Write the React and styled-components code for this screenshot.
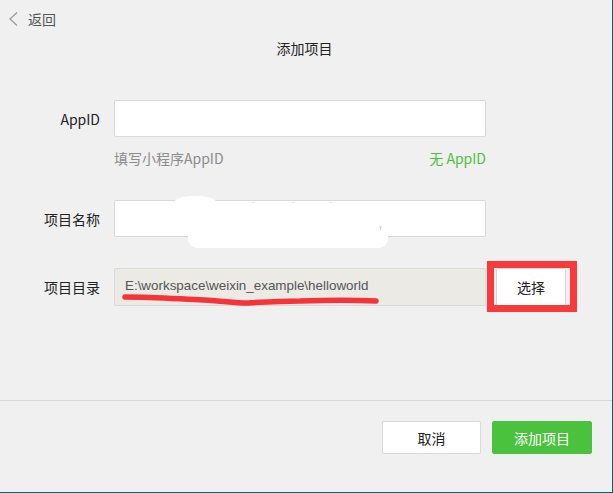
import React from "react";
import styled, { createGlobalStyle } from "styled-components";

const GlobalStyle = createGlobalStyle`
    html, body {
        margin: 0;
        padding: 0;
        background: #f0f0f0;
    }
    body {
        font-family: "Noto Sans CJK SC", "Noto Sans", sans-serif;
        font-size: 14px;
        color: #333;
    }
`;

function App() {
    return (
        <Page>
            <GlobalStyle />
            <Content>
                <BackRow>
                    <svg width="9" height="14" viewBox="0 0 9 14">
                        <polyline
                            points="8,0.5 1,7 8,13.5"
                            fill="none"
                            stroke="#9a9a9a"
                            strokeWidth="1.2"
                        />
                    </svg>
                    <span>返回</span>
                </BackRow>
                <Title>添加项目</Title>

                <Row>
                    <Label>AppID</Label>
                    <Field>
                        <Input />
                    </Field>
                </Row>
                <Hint>
                    <span>填写小程序AppID</span>
                    <NoAppId>无 AppID</NoAppId>
                </Hint>

                <Row $gap={32}>
                    <Label>项目名称</Label>
                    <Field>
                        <Input />
                        <Overlay viewBox="0 0 372 37">
                            <path
                                d="M60 4 C58 -6 96 -6 102 1 L102 12 L62 12 Z"
                                fill="#ffffff"
                            />
                            <rect x="74" y="28" width="200" height="20" rx="9" fill="#ffffff" />
                            <circle cx="139" cy="2.5" r="0.6" fill="#cfcfcf" />
                            <circle cx="179" cy="2.5" r="0.6" fill="#cfcfcf" />
                            <circle cx="217" cy="2.5" r="0.6" fill="#cfcfcf" />
                            <path d="M265 27 h3 M266.5 27 v3" stroke="#c4c4c4" strokeWidth="0.7" />
                        </Overlay>
                    </Field>
                </Row>

                <Row $gap={31}>
                    <Label>项目目录</Label>
                    <Field>
                        <PathBox>E:\workspace\weixin_example\helloworld</PathBox>
                        <Overlay viewBox="0 0 372 38">
                            <path
                                d="M11 29 C40 29 65 31 90 32 C110 33 120 35 133 35 C150 34 165 33 186 33 C215 32 240 32 262 33"
                                fill="none"
                                stroke="#f5333a"
                                strokeWidth="5.5"
                                strokeLinecap="round"
                            />
                        </Overlay>
                    </Field>
                    <ChooseWrap>
                        <ChooseButton>选择</ChooseButton>
                    </ChooseWrap>
                </Row>
            </Content>

            <Footer>
                <Button>取消</Button>
                <Button $primary>添加项目</Button>
            </Footer>
        </Page>
    );
}

export default App;

const Page = styled.div`
    width: 613px;
    height: 493px;
    box-sizing: border-box;
    border-right: 1px solid #0d5f6e;
    border-bottom: 1px solid #0d5f6e;
    background: #f0f0f0;
    display: flex;
    flex-direction: column;
`;
const Content = styled.div`
    flex: 1 1 0%;
`;
const BackRow = styled.div`
    height: 38px;
    display: flex;
    align-items: center;
    padding-left: 9px;
    color: #555;
    span {
        margin-left: 10px;
        line-height: 20px;
    }
    svg {
        display: block;
    }
`;
const Title = styled.div`
    text-align: center;
    line-height: 20px;
    margin-left: -3px;
    color: #222;
    margin-bottom: 42px;
`;
const Row = styled.div`
    display: flex;
    align-items: center;
    margin-top: ${(p) => (p.$gap ? p.$gap + "px" : "0")};
`;
const Label = styled.div`
    width: 100px;
    text-align: right;
    margin-right: 14px;
    color: #222;
    line-height: 20px;
`;
const Field = styled.div`
    position: relative;
    width: 372px;
`;
const Input = styled.div`
    height: 37px;
    box-sizing: border-box;
    background: #fff;
    border: 1px solid #d9d9d9;
    border-radius: 2px;
`;
const Overlay = styled.svg`
    position: absolute;
    left: 0;
    top: 0;
    width: 100%;
    height: 100%;
    overflow: visible;
    pointer-events: none;
`;
const Hint = styled.div`
    display: flex;
    justify-content: space-between;
    width: 372px;
    margin-left: 114px;
    margin-top: 11px;
    line-height: 20px;
    color: #8c8c8c;
`;
const NoAppId = styled.span`
    color: #4cc13d;
`;
const PathBox = styled.div`
    height: 38px;
    box-sizing: border-box;
    background: #ebeae4;
    border: 1px solid #d9d9d9;
    border-radius: 2px;
    padding-left: 10px;
    display: flex;
    align-items: center;
    padding-bottom: 3px;
    font-family: "Liberation Sans", Arial, sans-serif;
    font-size: 13.4px;
    color: #555;
`;
const ChooseWrap = styled.div`
    position: relative;
    margin-left: 10px;
    &::after {
        content: "";
        position: absolute;
        left: -9px;
        right: -11px;
        top: -7px;
        bottom: -6px;
        border: 7px solid #f93a3c;
        pointer-events: none;
    }
`;
const ChooseButton = styled.div`
    width: 70px;
    height: 38px;
    box-sizing: border-box;
    background: #fff;
    border: 1px solid #d9d9d9;
    border-radius: 2px;
    display: flex;
    align-items: center;
    justify-content: center;
    color: #222;
`;
const Footer = styled.div`
    height: 92px;
    box-sizing: border-box;
    border-top: 1px solid #d8d8d8;
    display: flex;
    justify-content: flex-end;
    gap: 11px;
    padding: 20px 20px 0 0;
`;
const Button = styled.div`
    width: ${(p) => (p.$primary ? "100px" : "99px")};
    height: 33px;
    box-sizing: border-box;
    border-radius: 2px;
    display: flex;
    align-items: center;
    justify-content: center;
    background: ${(p) => (p.$primary ? "#4bc23e" : "#fff")};
    border: 1px solid ${(p) => (p.$primary ? "#4bc23e" : "#d9d9d9")};
    color: ${(p) => (p.$primary ? "#fff" : "#222")};
`;
